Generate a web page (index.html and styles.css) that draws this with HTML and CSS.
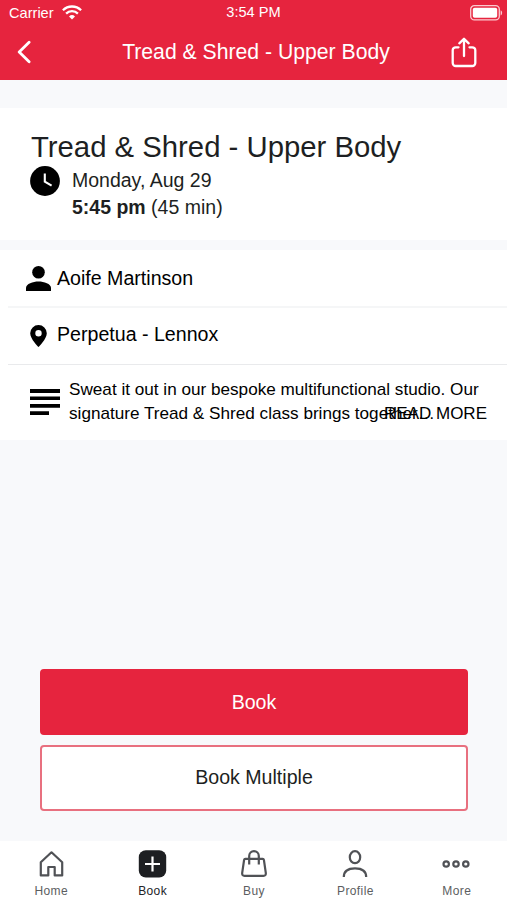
FILE: index.html
```html
<!DOCTYPE html>
<html lang="en">
<head>
    <meta charset="UTF-8">
    <meta name="viewport" content="width=device-width, initial-scale=1.0">
    <title>Tread &amp; Shred - Upper Body</title>
    <link rel="stylesheet" href="styles.css">
</head>
<body>
    <div class="app">
        <header class="header">
            <div class="status-bar">
                <div class="carrier">
                    <span>Carrier</span>
                    <svg width="20" height="15" viewBox="0 0 20 15" fill="none" stroke="#fff" stroke-width="2.3">
                        <path d="M.9 5.2a13 13 0 0 1 18.2 0"/>
                        <path d="M4.1 8.6a8.4 8.4 0 0 1 11.8 0"/>
                        <path d="M10 14.4 7 11.5a4.3 4.3 0 0 1 6 0z" fill="#fff" stroke="none"/>
                    </svg>
                </div>
                <span class="time">3:54 PM</span>
                <svg class="battery" width="33" height="16" viewBox="0 0 33 16">
                    <rect x=".7" y=".7" width="28.6" height="14.2" rx="3.6" fill="none" stroke="#fbc9cf" stroke-width="1.3"/>
                    <rect x="2.8" y="2.8" width="24.4" height="10" rx="1.8" fill="#fff"/>
                    <path d="M30.6 5.2c2 .8 2 4.4 0 5.2z" fill="#fbc9cf"/>
                </svg>
            </div>
            <div class="nav-bar">
                <svg width="14" height="24" viewBox="0 0 14 24" fill="none" stroke="#fff" stroke-width="2.8" stroke-linecap="round" stroke-linejoin="round">
                    <path d="M12.1 2.2 2.2 12l9.9 9.8"/>
                </svg>
                <span class="nav-title">Tread &amp; Shred - Upper Body</span>
                <svg class="share" width="26" height="31" viewBox="0 0 26 31" fill="none" stroke="#fff" stroke-width="2.3" stroke-linecap="round" stroke-linejoin="round">
                    <path d="M7.500 10.300H4.700a3 3 0 0 0-3 3V26a3 3 0 0 0 3 3h16.600a3 3 0 0 0 3-3V13.300a3 3 0 0 0-3-3H18.500"/>
                    <path d="M13 19V2.500M8.300 6.300 13 1.800l4.700 4.500"/>
                </svg>
            </div>
        </header>

        <section class="summary">
            <h1>Tread &amp; Shred - Upper Body</h1>
            <div class="when">
                <svg width="30" height="30" viewBox="0 0 30 30">
                    <circle cx="15" cy="15" r="14.9"/>
                    <path d="M14.800 7.500V15.700l6.800 4" fill="none" stroke="#fff" stroke-width="2.1"/>
                </svg>
                <p>Monday, Aug 29<br><b>5:45 pm</b> (45 min)</p>
            </div>
        </section>

        <section class="details">
            <div class="row">
                <svg width="25" height="25" viewBox="0 0 25 25">
                    <circle cx="12.500" cy="6.300" r="6.300"/>
                    <path d="M0 25v-3c0-4 7-6.400 12.500-6.400S25 18 25 22v3z"/>
                </svg>
                <span>Aoife Martinson</span>
            </div>
            <div class="row place">
                <svg width="25" height="22" viewBox="0 0 25 22">
                    <path fill-rule="evenodd" d="M12.500 0A8.300 8.300 0 0 0 4.200 8.200C4.200 14 12.500 22 12.500 22S20.800 14 20.800 8.200A8.300 8.300 0 0 0 12.500 0zm0 5a3.200 3.200 0 1 1 0 6.400 3.200 3.200 0 0 1 0-6.400z"/>
                </svg>
                <span>Perpetua - Lennox</span>
            </div>
            <div class="row about">
                <svg width="30" height="27" viewBox="0 0 30 27">
                    <path d="M0 0h30v4H0zM0 7.500h30v3.500H0zM0 15h30v3.700H0zM0 22.300h19v3.700H0z"/>
                </svg>
                <p>Sweat it out in our bespoke multifunctional studio. Our<br>signature Tread &amp; Shred class brings together…</p>
                <a class="read-more">READ MORE</a>
            </div>
        </section>

        <div class="actions">
            <button class="btn btn-primary">Book</button>
            <button class="btn">Book Multiple</button>
        </div>

        <nav class="tabs">
            <a class="tab">
                <svg width="30" height="30" viewBox="0 0 30 30">
                    <path d="M4.800 26.400V13.300L15.500 3.300l10.700 10V26.400H18.700V18H12.300v8.400z"/>
                </svg>
                <span>Home</span>
            </a>
            <a class="tab active">
                <svg width="30" height="30" viewBox="0 0 30 30">
                    <rect class="solid" x="1.800" y="1.300" width="27.400" height="27.200" rx="7"/>
                    <path class="plus" d="M15.500 7.500v15M8 15h15"/>
                </svg>
                <span>Book</span>
            </a>
            <a class="tab">
                <svg width="30" height="30" viewBox="0 0 30 30">
                    <path d="M6.300 9.900h17.400q1 0 1.200 1l1.900 13q.3 2.900-2.300 2.900h-19q-2.600 0-2.300-2.900l1.900-13q.2-1 1.200-1z"/>
                    <path d="M10.200 15.500V7a4.800 4.800 0 0 1 9.600 0v8.500"/>
                </svg>
                <span>Buy</span>
            </a>
            <a class="tab">
                <svg width="30" height="30" viewBox="0 0 30 30">
                    <ellipse cx="15" cy="8.200" rx="5.200" ry="6"/>
                    <path d="M3.800 28c0-5.500 4-8.700 11.200-8.700S26.200 22.500 26.200 28"/>
                </svg>
                <span>Profile</span>
            </a>
            <a class="tab">
                <svg width="30" height="30" viewBox="0 0 30 30">
                    <circle cx="5.200" cy="15" r="2.700"/>
                    <circle cx="15" cy="15" r="2.700"/>
                    <circle cx="24.800" cy="15" r="2.700"/>
                </svg>
                <span>More</span>
            </a>
        </nav>
    </div>
</body>
</html>
```
FILE: styles.css
```css
* {
    box-sizing: border-box;
}
body {
    margin: 0;
    font-family: "Liberation Sans", Arial, sans-serif;
    background-color: #f8f9fb;
    color: #1d1f22;
}
h1, p {
    margin: 0;
    font-weight: normal;
}
svg {
    display: block;
    flex: none;
}
.app {
    display: flex;
    flex-direction: column;
    height: 900px;
}
.header {
    height: 80px;
    background-color: #e6243e;
    color: #fff;
}
.status-bar {
    display: grid;
    grid-template-columns: 1fr auto 1fr;
    align-items: center;
    height: 25px;
    padding: 0 4px;
    font-size: 14.6px;
}
.carrier {
    display: flex;
    align-items: center;
    gap: 8px;
    padding-left: 5px;
}
.time {
    padding-bottom: 2px;
}
.battery {
    justify-self: end;
}
.nav-bar {
    display: grid;
    grid-template-columns: 60px 1fr 60px;
    align-items: center;
    height: 54px;
    padding: 0 30px 0 17px;
}
.nav-title {
    padding-left: 18px;
    font-size: 21.2px;
    text-align: center;
}
.share {
    justify-self: end;
}
.summary {
    height: 132px;
    margin-top: 28px;
    padding: 22px 30px 0;
    background-color: #fff;
}
.summary h1 {
    padding-left: 1px;
    font-size: 29.3px;
    line-height: 34px;
}
.when {
    display: flex;
    gap: 12px;
    padding-top: 2px;
}
.when p {
    margin-top: 1px;
    font-size: 19.5px;
    line-height: 27px;
}
.details {
    height: 190px;
    margin-top: 10px;
    background-color: #fff;
    color: #000;
}
.row {
    display: flex;
    align-items: center;
    gap: 6px;
    height: 58px;
    margin-left: 8px;
    padding-left: 18px;
    border-bottom: 2px solid #f5f6f7;
    font-size: 19.6px;
}
.place {
    height: 57px;
    padding-bottom: 1px;
    border-bottom: 1px solid #e9eaec;
}
.place span {
    padding-bottom: 3px;
}
.about {
    position: relative;
    gap: 9px;
    height: 74px;
    padding-left: 22px;
    border-bottom: 0;
    font-size: 17.15px;
    line-height: 24px;
    white-space: nowrap;
}
.about p {
    padding-bottom: 2px;
}
/* sits over the end of the clipped second line */
.read-more {
    position: absolute;
    right: 20px;
    top: 37px;
    font-size: 17px;
}
.actions {
    display: flex;
    flex-direction: column;
    gap: 10px;
    margin-top: auto;
    padding: 0 39px 30px 40px;
}
.btn {
    height: 66px;
    padding-bottom: 3px;
    border: 2px solid #e8707f;
    border-radius: 4px;
    background-color: #fff;
    color: #1d1f22;
    font-family: inherit;
    font-size: 19.6px;
}
.btn-primary {
    padding-bottom: 1px;
    border-color: #e6243e;
    background-color: #e6243e;
    color: #fff;
}
.tabs {
    display: flex;
    height: 59px;
    background-color: #fff;
}
.tab {
    display: flex;
    flex: 1;
    flex-direction: column;
    align-items: center;
    padding-top: 8px;
    color: #5c5e61;
    font-size: 12px;
    letter-spacing: 0.4px;
}
.tab svg {
    fill: none;
    stroke: #505256;
    stroke-width: 2.2;
    stroke-linejoin: round;
}
.tab span {
    margin-top: 5px;
    padding-left: 1px;
    line-height: 14px;
}
.active {
    color: #222427;
}
.tab .solid {
    fill: #1d1f22;
    stroke: none;
}
.tab .plus {
    stroke: #fff;
}
```
